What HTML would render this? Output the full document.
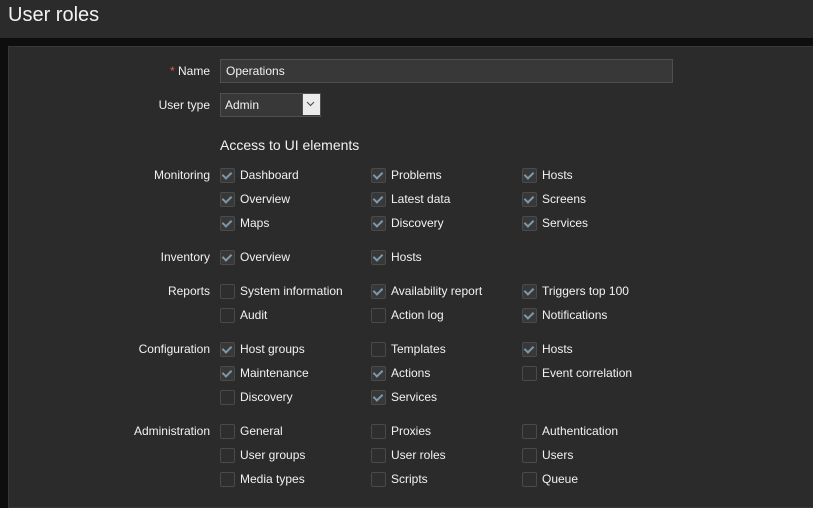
<!DOCTYPE html>
<html><head><style>
body{margin:0;width:813px;height:499px;background:#0e0e0e;font-family:"Liberation Sans",sans-serif;font-size:12px;color:#f2f2f2;overflow:hidden;position:relative}
.hdr{position:absolute;left:0;top:0;width:813px;height:38px;background:#2b2b2b}
.hdr h1{margin:0;position:absolute;left:8px;top:4px;font-size:20px;font-weight:normal;color:#f2f2f2}
.panel{position:absolute;left:8px;top:46px;width:810px;height:460px;background:#2b2b2b;border:1px solid #383838}
.a{position:absolute;white-space:nowrap}
.lbl{position:absolute;right:603px;white-space:nowrap;text-align:right}
.cb{position:absolute;width:13px;height:13px;border:1px solid #4a4a4a;background:#2e2e2e;border-radius:2px}
.cb.c{background:#383838}
.cb.c::after{content:"";position:absolute;left:3px;top:1px;width:4px;height:7px;border:solid #7c99ab;border-width:0 2px 2px 0;transform:rotate(45deg)}
</style></head><body>
<div class="hdr"><h1>User roles</h1></div>
<div class="panel"></div>
<div class="lbl" style="top:64px"><span style="color:#e45959">*</span> Name</div>
<div class="a" style="left:220px;top:59px;width:451px;height:22px;background:#383838;border:1px solid #4f4f4f"></div>
<div class="a" style="left:226px;top:64px">Operations</div>
<div class="lbl" style="top:98px">User type</div>
<div class="a" style="left:220px;top:93px;width:99px;height:22px;background:#383838;border:1px solid #4f4f4f"></div>
<div class="a" style="left:302px;top:94px;width:17px;height:21px;background:#ebebeb;border-left:1px solid #4f4f4f"></div>
<svg class="a" style="left:305px;top:100px" width="11" height="8"><path d="M2 2 L5.5 5.5 L9 2" stroke="#555" fill="none" stroke-width="1.2"/></svg>
<div class="a" style="left:225px;top:98px">Admin</div>
<div class="a" style="left:220px;top:137px;font-size:14px">Access to UI elements</div>
<div id="g"></div>
<script>
var rows=[
[175,"Monitoring",[["Dashboard",1],["Problems",1],["Hosts",1]]],
[199,"",[["Overview",1],["Latest data",1],["Screens",1]]],
[223,"",[["Maps",1],["Discovery",1],["Services",1]]],
[257,"Inventory",[["Overview",1],["Hosts",1]]],
[291,"Reports",[["System information",0],["Availability report",1],["Triggers top 100",1]]],
[315,"",[["Audit",0],["Action log",0],["Notifications",1]]],
[349,"Configuration",[["Host groups",1],["Templates",0],["Hosts",1]]],
[373,"",[["Maintenance",1],["Actions",1],["Event correlation",0]]],
[397,"",[["Discovery",0],["Services",1]]],
[431,"Administration",[["General",0],["Proxies",0],["Authentication",0]]],
[455,"",[["User groups",0],["User roles",0],["Users",0]]],
[479,"",[["Media types",0],["Scripts",0],["Queue",0]]]];
var h="",xs=[220,371,522];
rows.forEach(function(r){var y=r[0];
if(r[1])h+='<div class="lbl" style="top:'+(y-7)+'px">'+r[1]+'</div>';
r[2].forEach(function(c,i){h+='<div class="cb'+(c[1]?' c':'')+'" style="left:'+xs[i]+'px;top:'+(y-7)+'px"></div><div class="a" style="left:'+(xs[i]+20)+'px;top:'+(y-7)+'px">'+c[0]+'</div>';});});
document.getElementById("g").innerHTML=h;
</script>
</body></html>
